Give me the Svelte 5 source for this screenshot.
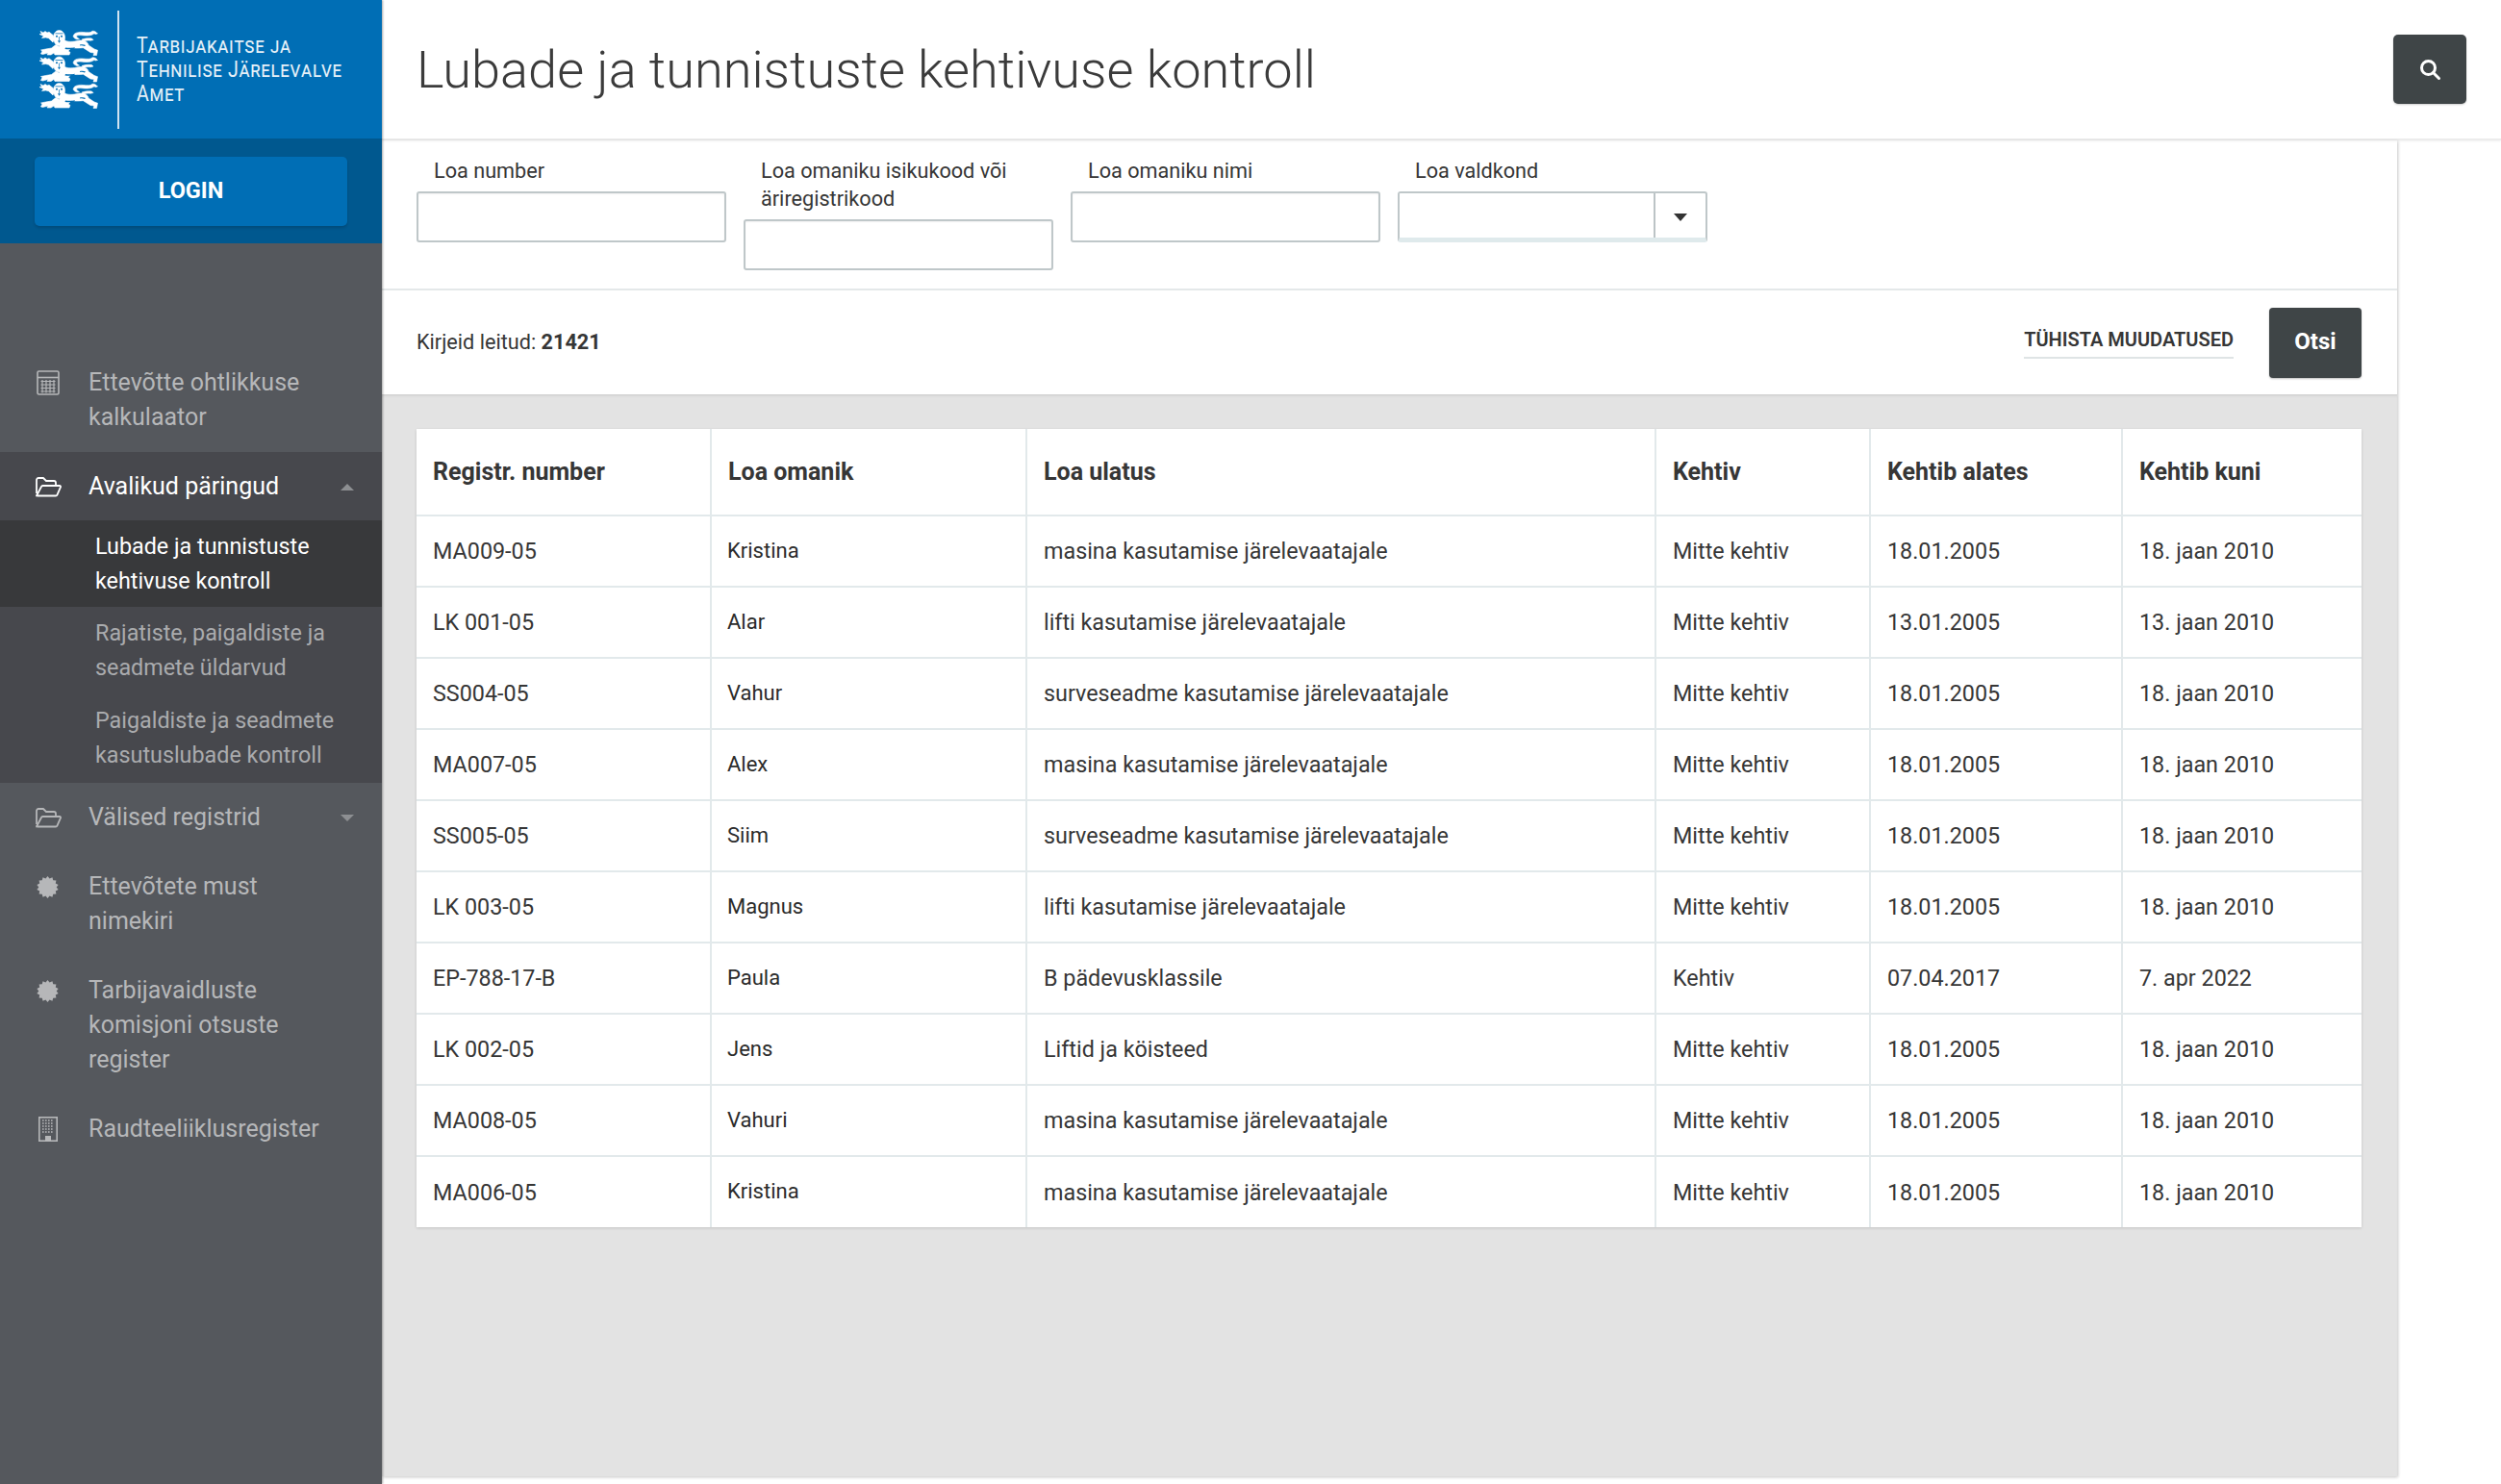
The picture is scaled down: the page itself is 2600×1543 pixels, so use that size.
<script>
	const columns = ['Registr. number', 'Loa omanik', 'Loa ulatus', 'Kehtiv', 'Kehtib alates', 'Kehtib kuni'];
	const masin = 'masina kasutamise järelevaatajale';
	const lift = 'lifti kasutamise järelevaatajale';
	const surve = 'surveseadme kasutamise järelevaatajale';
	const rows = [
		['MA009-05', 'Kristina', masin, 'Mitte kehtiv', '18.01.2005', '18. jaan 2010'],
		['LK 001-05', 'Alar', lift, 'Mitte kehtiv', '13.01.2005', '13. jaan 2010'],
		['SS004-05', 'Vahur', surve, 'Mitte kehtiv', '18.01.2005', '18. jaan 2010'],
		['MA007-05', 'Alex', masin, 'Mitte kehtiv', '18.01.2005', '18. jaan 2010'],
		['SS005-05', 'Siim', surve, 'Mitte kehtiv', '18.01.2005', '18. jaan 2010'],
		['LK 003-05', 'Magnus', lift, 'Mitte kehtiv', '18.01.2005', '18. jaan 2010'],
		['EP-788-17-B', 'Paula', 'B pädevusklassile', 'Kehtiv', '07.04.2017', '7. apr 2022'],
		['LK 002-05', 'Jens', 'Liftid ja köisteed', 'Mitte kehtiv', '18.01.2005', '18. jaan 2010'],
		['MA008-05', 'Vahuri', masin, 'Mitte kehtiv', '18.01.2005', '18. jaan 2010'],
		['MA006-05', 'Kristina', masin, 'Mitte kehtiv', '18.01.2005', '18. jaan 2010']
	];
	const widths = [306, 328, 654, 223, 262, 249];
	const subItems = [
		{ text: 'Lubade ja tunnistuste kehtivuse kontroll', active: true },
		{ text: 'Rajatiste, paigaldiste ja seadmete üldarvud', active: false },
		{ text: 'Paigaldiste ja seadmete kasutuslubade kontroll', active: false }
	];
	const burst = Array.from({ length: 28 }, (_, i) => {
		const r = i % 2 ? 11.4 : 9.2;
		const a = (i / 28) * Math.PI * 2;
		return `${(11.5 + r * Math.cos(a)).toFixed(2)},${(11.5 + r * Math.sin(a)).toFixed(2)}`;
	}).join(' ');
</script>

{#snippet folder()}
	<svg class="ic" width="28" height="21" viewBox="0 0 28 21" fill="none" stroke="currentColor" stroke-width="1.8" stroke-linejoin="round">
		<path d="M2 17V3a2 2 0 0 1 2-2h5l3 3h8a2 2 0 0 1 2 2v3" />
		<path d="M2 19.5 7 10a1.5 1.5 0 0 1 1.4-1H26a1 1 0 0 1 1 1.4l-3.6 8.2a1.5 1.5 0 0 1-1.4.9H3a1.4 1.4 0 0 1-1-.5z" />
	</svg>
{/snippet}

{#snippet starburst()}
	<svg class="ic" width="23" height="23" viewBox="0 0 23 23"><polygon points={burst} fill="currentColor" /></svg>
{/snippet}

{#snippet lion()}
	<g fill="#fff" stroke="#fff" stroke-width="0.6">
		<path d="M1 1.5 4 3l2-1.5L8 3l2-.8 4 3.200 1.500 4-1.500 3.500-4.500-4.200-3-.7-4 .5 1.800-2L0 4.500 2.500 4.300z" />
		<path d="M14.500 8c0-4.200 2.800-7.500 6-7.500s6 3.300 6 7.500-2 8.500-6 8.500-6-4.300-6-8.500z" />
		<path d="M25 10.500c5 2.500 10 2 15 .8 6-1.300 10.500 1 11 4.700l6 4 3.500 1.200-1 5.300h-3.500l.8-2.500-3.800-.5-7.500-4.800c-4 .5-8.500.5-12.500 0l-3 3.300 2 1.500-1 2.500H16l-1-2-3 2H8l1-2-3.500 1-2 .5-2-.5 1.500-3L1.500 21l5-1 6-1 4.500-3.500 3.500 2z" />
		<path d="M39 10c-3-1.200-4.500-2.500-3.500-4.500 1-2.500 5.500-3.500 10-3 5 .5 7.500.4 8.500-.5 1-1.300 3-.9 5 .5l1.500 1.500-2.500.5c-1-1-2 0-3 .6-3 1.200-6.500 1-10.500.6-3-.3-5.500 0-6 .9-.3.8 1.500 2 3 3z" />
		<path d="M44 10c3-1 7-1.500 10.500-1l1.500 1.500-3 .7c-2.500-.3-5 0-7 .6z" />
	</g>
	<g fill="#006eb5">
		<circle cx="18" cy="6.800" r="1" />
		<circle cx="23" cy="6.800" r="1" />
		<path d="M19 11.200h3l-1.500 2.500zM16.500 3.600h8v.7h-8zM20.200 7h.7v4h-.7z" />
		<path d="M27 18.500c3 .5 6.500.5 10-.3l-1 1.500c-3 .6-6.500.6-9.500.2zM42 15.500c2-.6 4.500-.5 6 .6l-1 .9c-1.500-.6-3-.8-5-.6z" />
	</g>
{/snippet}

<div class="page">
	<aside class="sidebar">
		<div class="brand">
			<svg class="crest" width="61" height="82" viewBox="0 0 61 82">
				<g>{@render lion()}</g>
				<g transform="translate(0 27.500)">{@render lion()}</g>
				<g transform="translate(0 55)">{@render lion()}</g>
			</svg>
			<div class="brand-rule"></div>
			<div class="brand-name">Tarbijakaitse ja<br />Tehnilise Järelevalve<br />Amet</div>
		</div>
		<div class="login-band">
			<button class="login">LOGIN</button>
		</div>
		<nav>
			<div class="item">
				<span class="icon">
					<svg class="ic" width="24" height="26" viewBox="0 0 24 26" fill="none" stroke="currentColor" stroke-width="1.6">
						<rect x="1" y="1" width="22" height="24" rx="1.500" />
						<path d="M1 7.500h22" />
						<path d="M4.500 11.500h15M4.500 15h15M4.500 18.500h15M4.500 22h15M6 10v13.500M10 10v13.500M14 10v13.500M18 10v13.500" stroke-width="1.200" />
					</svg>
				</span>
				<span class="label">Ettevõtte ohtlikkuse kalkulaator</span>
			</div>
			<div class="group">
				<div class="item open">
					<span class="icon">{@render folder()}</span>
					<span class="label">Avalikud päringud</span>
					<span class="caret up"></span>
				</div>
				{#each subItems as sub}
					<div class="sub" class:active={sub.active}>{sub.text}</div>
				{/each}
			</div>
			<div class="item">
				<span class="icon">{@render folder()}</span>
				<span class="label">Välised registrid</span>
				<span class="caret"></span>
			</div>
			<div class="item">
				<span class="icon">{@render starburst()}</span>
				<span class="label short">Ettevõtete must nimekiri</span>
			</div>
			<div class="item">
				<span class="icon">{@render starburst()}</span>
				<span class="label short">Tarbijavaidluste komisjoni otsuste register</span>
			</div>
			<div class="item">
				<span class="icon">
					<svg class="ic" width="20" height="26" viewBox="0 0 20 26" fill="none" stroke="currentColor">
						<rect x="0.800" y="0.800" width="18.400" height="24.400" stroke-width="1.600" />
						<path d="M4 4h12M4 7h12M4 10h12M4 13h12M4 16h12" stroke-width="1.600" stroke-dasharray="1.600 1.400" />
						<rect x="7" y="20" width="6" height="5" fill="currentColor" stroke="none" />
					</svg>
				</span>
				<span class="label">Raudteeliiklusregister</span>
			</div>
		</nav>
	</aside>

	<div class="main">
		<header>
			<h1>Lubade ja tunnistuste kehtivuse kontroll</h1>
			<button class="search" aria-label="Otsi">
				<svg width="24" height="24" viewBox="0 0 24 24" fill="none" stroke="#fff" stroke-width="3">
					<circle cx="10.500" cy="10.500" r="7" />
					<path d="m15.500 15.500 6 6" stroke-linecap="round" />
				</svg>
			</button>
		</header>

		<section class="panel">
			<div class="filters">
				<div class="field">
					<label for="f1">Loa number</label>
					<input id="f1" />
				</div>
				<div class="field">
					<label for="f2">Loa omaniku isikukood või äriregistrikood</label>
					<input id="f2" />
				</div>
				<div class="field">
					<label for="f3">Loa omaniku nimi</label>
					<input id="f3" />
				</div>
				<div class="field">
					<label for="f4">Loa valdkond</label>
					<div class="select">
						<div class="select-value"></div>
						<div class="select-arrow"><span></span></div>
					</div>
				</div>
			</div>

			<div class="actions">
				<div class="count">Kirjeid leitud: <b>21421</b></div>
				<button class="reset">TÜHISTA MUUDATUSED</button>
				<button class="go">Otsi</button>
			</div>

			<div class="results">
				<table>
					<colgroup>
						{#each widths as w}
							<col style="width: {w}px" />
						{/each}
					</colgroup>
					<thead>
						<tr>
							{#each columns as c}
								<th>{c}</th>
							{/each}
						</tr>
					</thead>
					<tbody>
						{#each rows as row}
							<tr>
								{#each row as cell, i}
									<td class:owner={i === 1}>{cell}</td>
								{/each}
							</tr>
						{/each}
					</tbody>
				</table>
			</div>
		</section>
	</div>
</div>

<style>
	:global(body) {
		margin: 0;
		background: #fff;
	}
	.page {
		display: flex;
		width: 2600px;
		height: 1543px;
		overflow: hidden;
		font-family: Roboto, "Liberation Sans", sans-serif;
		color: #363636;
	}

	.sidebar {
		flex: 0 0 397px;
		display: flex;
		flex-direction: column;
		background: #55585d;
		box-shadow: 1px 0 2px rgba(0, 0, 0, 0.35);
		z-index: 2;
	}
	.brand {
		height: 144px;
		display: flex;
		align-items: center;
		background: #006eb5;
		padding-left: 41px;
		box-sizing: border-box;
	}
	.brand-rule {
		width: 2px;
		height: 123px;
		margin-left: 20px;
		background: #cfe3f1;
	}
	.brand-name {
		margin-left: 18px;
		color: #e4f0f8;
		font-size: 23px;
		line-height: 25px;
		font-variant: small-caps;
		letter-spacing: 0.8px;
		white-space: nowrap;
		transform: scaleX(0.853);
		transform-origin: left center;
	}
	.login-band {
		height: 109px;
		box-sizing: border-box;
		padding: 19px 36px 18px;
		background: #00588f;
	}
	.login {
		display: block;
		width: 325px;
		height: 72px;
		padding: 0 0 3px;
		border: 0;
		border-radius: 5px;
		background: #006eb5;
		box-shadow: 0 2px 3px rgba(0, 0, 0, 0.15);
		color: #fff;
		font: 700 23.5px Roboto, sans-serif;
	}

	nav {
		padding-top: 109px;
		color: #b6b7b9;
		font-size: 25px;
		line-height: 36px;
	}
	.item {
		display: flex;
		align-items: flex-start;
		padding: 18px 0;
	}
	.item.open {
		padding-bottom: 17px;
	}
	.icon {
		flex: 0 0 92px;
		height: 36px;
		display: flex;
		align-items: center;
		justify-content: center;
		padding-right: 1px;
		box-sizing: border-box;
		padding-left: 8px;
		width: 92px;
	}
	.ic {
		display: block;
	}
	.label {
		width: 245px;
	}
	.label.short {
		width: 220px;
	}
	.group {
		background: #47484d;
	}
	.open {
		color: #fff;
	}
	.open .icon {
		color: #fff;
	}
	.caret {
		width: 0;
		height: 0;
		margin: 15px 0 0 auto;
		margin-right: 29px;
		border-left: 7px solid transparent;
		border-right: 7px solid transparent;
		border-top: 7px solid #8d8f92;
	}
	.caret.up {
		border-top: 0;
		border-bottom: 7px solid #8d8f92;
	}
	.sub {
		padding: 9px 40px 9px 99px;
		font-size: 23.33px;
		color: #aaabad;
	}
	.sub:last-child {
		padding-top: 10px;
		padding-bottom: 11px;
	}
	.sub.active {
		background: #38393b;
		color: #fff;
	}

	.main {
		flex: 1;
		display: flex;
		flex-direction: column;
		min-width: 0;
	}
	header {
		height: 144px;
		flex: none;
		display: flex;
		align-items: center;
		justify-content: space-between;
		padding: 0 36px;
		border-bottom: 2px solid #ececec;
		box-shadow: 0 1px 2px rgba(0, 0, 0, 0.06);
	}
	h1 {
		margin: 0;
		font-size: 54.1px;
		font-weight: 300;
		color: #3b3b3b;
	}
	.search {
		width: 76px;
		height: 72px;
		padding: 0;
		border: 0;
		border-radius: 5px;
		background: #3f4547;
		display: flex;
		align-items: center;
		justify-content: center;
		box-shadow: 0 1px 2px rgba(0, 0, 0, 0.2);
	}

	.panel {
		width: 2095px;
		flex: 1;
		margin-bottom: 8px;
		display: flex;
		flex-direction: column;
		box-shadow: 1px 1px 3px rgba(0, 0, 0, 0.22);
	}
	.filters {
		height: 156px;
		box-sizing: border-box;
		display: flex;
		align-items: flex-start;
		gap: 18px;
		padding: 17px 0 0 36px;
		border-bottom: 2px solid #e4e8e9;
	}
	.field {
		width: 322px;
		font-size: 21.67px;
		line-height: 29px;
	}
	.field label {
		display: block;
		padding: 0 18px;
		margin-bottom: 7px;
	}
	.field input {
		display: block;
		width: 100%;
		height: 53px;
		box-sizing: border-box;
		border: 2px solid #bfc7c9;
		border-radius: 3px;
		background: #fff;
		box-shadow: inset 0 1px 2px rgba(0, 0, 0, 0.06);
	}
	.select {
		display: flex;
		height: 53px;
		box-sizing: border-box;
		border: 2px solid #bfc7c9;
		border-bottom-width: 5px;
		border-bottom-color: #dfeaec;
		border-radius: 3px;
	}
	.select-value {
		flex: 1;
	}
	.select-arrow {
		width: 52px;
		border-left: 2px solid #bcc4c6;
		display: flex;
		align-items: center;
		justify-content: center;
	}
	.select-arrow span {
		border-left: 7px solid transparent;
		border-right: 7px solid transparent;
		border-top: 8px solid #333;
		margin-top: 3px;
	}

	.actions {
		height: 108px;
		flex: none;
		box-sizing: border-box;
		display: flex;
		align-items: center;
		padding: 0 37px 0 36px;
	}
	.count {
		font-size: 21.67px;
		margin-right: auto;
		margin-top: -2px;
	}
	.reset {
		padding: 0 0 6px;
		margin: 1px 37px 0 0;
		border: 0;
		border-bottom: 2px solid #dfe4e5;
		background: none;
		color: #363636;
		font: 600 20px Roboto, sans-serif;
	}
	.go {
		width: 96px;
		height: 73px;
		padding: 0 0 2px;
		border: 0;
		border-radius: 4px;
		background: #3f4547;
		color: #fff;
		font: 700 24px Roboto, sans-serif;
		box-shadow: 0 1px 2px rgba(0, 0, 0, 0.25);
	}

	.results {
		flex: 1;
		background: #e3e3e3;
		padding: 36px 37px 0 36px;
		box-shadow: inset 0 3px 3px -2px rgba(0, 0, 0, 0.12);
	}
	table {
		width: 2022px;
		table-layout: fixed;
		border-collapse: collapse;
		background: #fff;
		box-shadow: 0 1px 3px rgba(0, 0, 0, 0.14);
		font-size: 23.33px;
	}
	th,
	td {
		padding: 0 17px;
		text-align: left;
		border-left: 2px solid #e2e9eb;
		border-top: 2px solid #e2e9eb;
	}
	th:first-child,
	td:first-child {
		border-left: 0;
	}
	thead th {
		border-top: 0;
		height: 89px;
		font-size: 25px;
		font-weight: 700;
	}
	td {
		height: 74px;
		box-sizing: border-box;
	}
	td.owner {
		font-size: 22px;
		color: #2b2b2b;
		padding-left: 16px;
		padding-bottom: 2px;
	}
</style>
